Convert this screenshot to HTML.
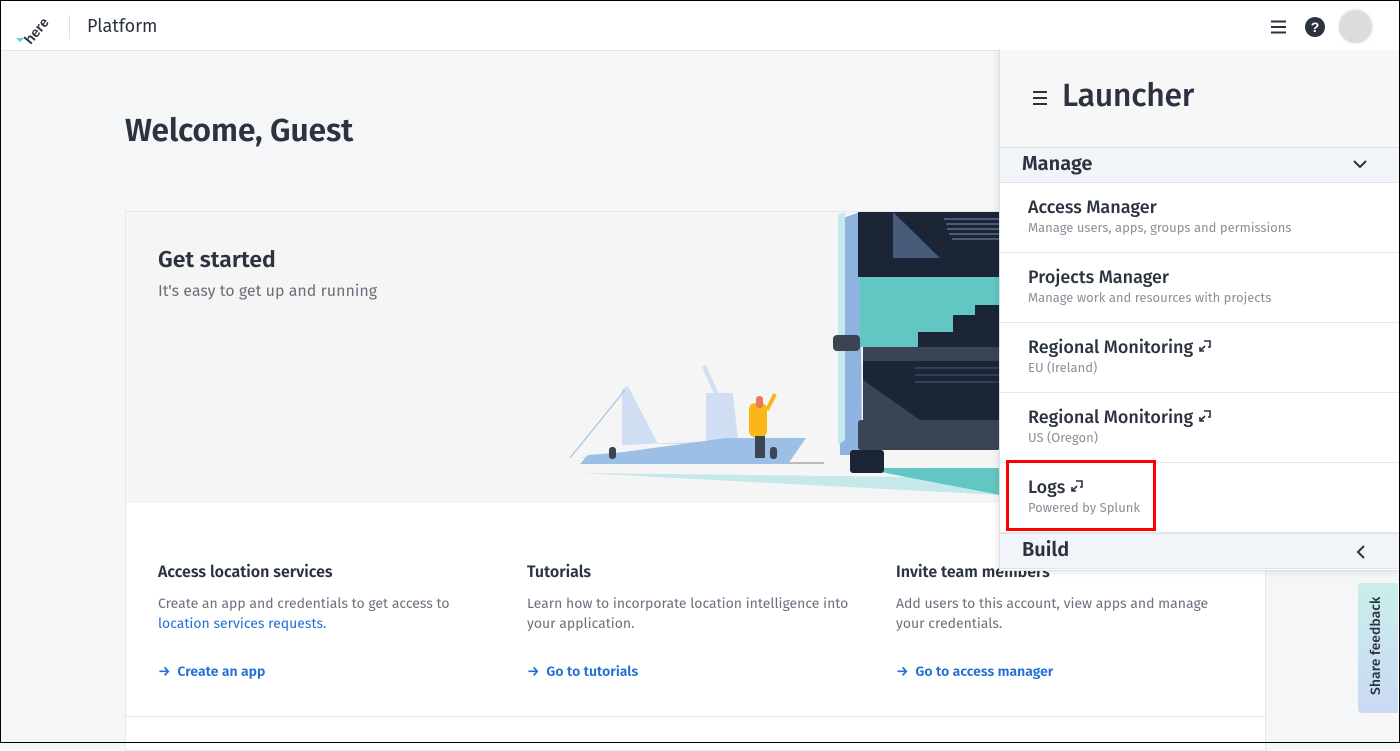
<!DOCTYPE html>
<html><head><meta charset="utf-8"><style>
*{box-sizing:border-box;margin:0;padding:0}
body{width:1400px;height:743px;overflow:hidden;font-family:"Fira Sans","Liberation Sans",sans-serif;background:#f5f6f7;position:relative;color:#2b3340}
.frame{position:absolute;inset:0;border:1px solid #000;pointer-events:none;z-index:50}
.hdr{position:absolute;left:0;top:0;width:1400px;height:51px;background:#fff;border-bottom:1px solid #e3e5e8}
.sep{position:absolute;left:69px;top:15px;width:1px;height:24px;background:#dde0e4}
.plat{position:absolute;left:87px;top:15px;font-size:18px;color:#2b3340}
h1{position:absolute;left:125px;top:112px;font-size:32px;font-weight:600;color:#2b3340;letter-spacing:-.2px}
.card{position:absolute;left:125px;top:211px;width:1141px;height:540px;background:#fff;border:1px solid #e6e8eb}
.hero{position:absolute;left:0;top:0;width:100%;height:291px;background:#f5f5f5;overflow:hidden}
.gs{position:absolute;left:32px;top:34px;font-size:23px;font-weight:600}
.gs2{position:absolute;left:32px;top:70px;font-size:16px;color:#6a717c}
.col{position:absolute;top:351px;width:330px}
.col h3{font-size:16px;font-weight:600;margin-bottom:12px}
.col p{font-size:14px;color:#6a717c;line-height:20px;height:69px}
.col a{color:#1f6fd6;text-decoration:none}
.col .l{font-size:14px;font-weight:600;color:#1f6fd6}
.line2{position:absolute;left:0;top:504px;width:100%;height:1px;background:#e3e5e8}
.panel{position:absolute;left:999px;top:50px;width:401px;height:521px;background:#fff;border-left:1px solid #dcdfe3;border-bottom:1px solid #dcdfe3;box-shadow:-2px 2px 6px rgba(0,0,0,.08)}
.ph{height:97px;background:#f7f7f7;position:relative}
.ph span{position:absolute;left:62px;top:27px;font-size:32px;font-weight:500;color:#2b3340;letter-spacing:-.3px}
.sec{height:36px;background:#f1f4f8;border-top:1px solid #dfe3e8;border-bottom:1px solid #dfe3e8;position:relative;font-size:20px;font-weight:600;padding:4px 0 0 22px}
.it{height:70px;border-bottom:1px solid #e6e8eb;padding:13px 0 0 28px}
.it b{display:block;font-size:18px;font-weight:500;color:#2b3340}
.it i{display:block;font-style:normal;font-size:13px;color:#8a9099;margin-top:3px}
.fb{position:absolute;left:1358px;top:583px;width:40px;height:130px;background:linear-gradient(#c9eeea,#cbd9f5);border-radius:4px 0 0 4px}
.fb span{position:absolute;left:9px;top:112px;transform:rotate(-90deg);transform-origin:0 0;font-size:14px;font-weight:500;white-space:nowrap;color:#2b3340}
</style></head><body>
<div class="hdr">
<svg style="position:absolute;left:12px;top:8px" width="40" height="38" viewBox="0 0 40 38"><text x="6" y="30" transform="rotate(-50 20 20)" font-family="Liberation Sans" font-weight="bold" font-size="14" fill="#2b3340">here</text><path d="M4 30 l8 0 l-4 4z" fill="#48dad0"/></svg>
<div class="sep"></div><div class="plat">Platform</div>
<svg style="position:absolute;left:1271px;top:20px" width="16" height="14"><path d="M0 1.5h15M0 7h15M0 12.5h15" stroke="#2b3340" stroke-width="2"/></svg>
<div style="position:absolute;left:1305px;top:17px;width:20px;height:20px;border-radius:50%;background:#2b3340;color:#fff;font-size:14px;font-weight:bold;text-align:center;line-height:20px;font-family:'Liberation Sans'">?</div>
<div style="position:absolute;left:1339px;top:10px;width:33px;height:33px;border-radius:50%;background:#dcdcdc;box-shadow:0 0 3px rgba(0,0,0,.15)"></div>
</div>
<h1>Welcome, Guest</h1>
<div class="card">
<div class="hero">
<div class="gs">Get started</div><div class="gs2">It's easy to get up and running</div>
<svg style="position:absolute;left:434px;top:-1px" width="707" height="292" viewBox="560 211 707 292">
<path d="M580 473 L1000 495 L1000 478 Z" fill="#c5e8ea"/><path d="M860 468 L1000 468 L1000 495 Z" fill="#62c6c2"/>
<path d="M611 463 L824 463" stroke="#bbb" stroke-width="2"/>
<path d="M622 389 L628 386 L658 444 L706 444 L706 393 L733 393 L738 440 L622 445 Z" fill="#cfdef2"/>
<path d="M704 366 L716 393" stroke="#cfdef2" stroke-width="4"/>
<path d="M580 464 L788 464 L806 438 L588 455 Z" fill="#9bbfe5"/>
<path d="M580 458 L726 438 L806 438 L788 458 Z" fill="#9bbfe5"/>
<path d="M570 458 L625 390" stroke="#9bbfe5" stroke-width="1"/>
<rect x="609" y="447" width="7" height="12" rx="3" fill="#3c4552"/><rect x="770" y="447" width="7" height="12" rx="3" fill="#3c4552"/>
<path d="M767 410 L775 394" stroke="#fbb718" stroke-width="4"/>
<rect x="749" y="403" width="18" height="34" rx="6" fill="#fbb718"/><rect x="756" y="396" width="7" height="12" rx="3" fill="#e57a5e"/><rect x="755" y="436" width="10" height="22" fill="#3c4552"/>
<path d="M843 218 L860 212 L862 455 L840 455 L840 430Z" fill="#8fb3e0"/><path d="M838 215 L845 212 L845 440 L838 445Z" fill="#c5e8ea"/>
<rect x="858" y="211" width="142" height="66" fill="#1b2535"/><path d="M893 212 L893 258 L940 258Z" fill="#465b78"/>
<g stroke="#5b6f8c" stroke-width="1.5"><path d="M944 219h56M946 224h54M947 229h53M949 234h51M952 239h48"/></g>
<rect x="860" y="277" width="140" height="70" fill="#62c6c2"/><path d="M918 347 L918 332 L953 332 L953 315 L975 315 L975 305 L1000 305 L1000 347Z" fill="#1b2535"/>
<rect x="863" y="347" width="137" height="14" fill="#3b4452"/><rect x="863" y="361" width="137" height="60" fill="#1b2535"/>
<path d="M863 380 L920 420 L1000 420 L1000 421 L863 421Z" fill="#3b4452"/>
<g stroke="#465b78"><path d="M915 368h85M915 375h85M915 382h85"/></g>
<rect x="858" y="420" width="142" height="30" rx="3" fill="#3b4452"/><rect x="850" y="450" width="34" height="23" rx="3" fill="#1b2535"/>
<rect x="833" y="335" width="27" height="16" rx="4" fill="#3b4452"/>
</svg>
</div>
<div class="col" style="left:32px"><h3>Access location services</h3><p>Create an app and credentials to get access to <a>location services requests.</a></p><div class="l">→&nbsp; Create an app</div></div>
<div class="col" style="left:401px"><h3>Tutorials</h3><p>Learn how to incorporate location intelligence into your application.</p><div class="l">→&nbsp; Go to tutorials</div></div>
<div class="col" style="left:770px"><h3>Invite team members</h3><p>Add users to this account, view apps and manage your credentials.</p><div class="l">→&nbsp; Go to access manager</div></div>
<div class="line2"></div>
</div>
<div class="panel">
<div class="ph"><svg style="position:absolute;left:33px;top:41px" width="15" height="14"><path d="M0 1h14M0 7h14M0 13h14" stroke="#2b3340" stroke-width="2"/></svg><span>Launcher</span></div>
<div class="sec">Manage<svg style="position:absolute;right:33px;top:12px" width="14" height="9"><path d="M1 1l6 6 6-6" stroke="#2b3340" stroke-width="2" fill="none"/></svg></div>
<div class="it"><b>Access Manager</b><i>Manage users, apps, groups and permissions</i></div>
<div class="it"><b>Projects Manager</b><i>Manage work and resources with projects</i></div>
<div class="it"><b>Regional Monitoring <svg width="14" height="14"><path d="M6 2h6v6h-2M2 12l5-5M2 8v4h4" stroke="#2b3340" stroke-width="1.6" fill="none"/></svg></b><i>EU (Ireland)</i></div>
<div class="it"><b>Regional Monitoring <svg width="14" height="14"><path d="M6 2h6v6h-2M2 12l5-5M2 8v4h4" stroke="#2b3340" stroke-width="1.6" fill="none"/></svg></b><i>US (Oregon)</i></div>
<div class="it"><b>Logs <svg width="14" height="14"><path d="M6 2h6v6h-2M2 12l5-5M2 8v4h4" stroke="#2b3340" stroke-width="1.6" fill="none"/></svg></b><i>Powered by Splunk</i></div>
<div class="sec">Build<svg style="position:absolute;right:35px;top:11px" width="9" height="14"><path d="M8 1l-6 6 6 6" stroke="#2b3340" stroke-width="2" fill="none"/></svg></div>
</div>
<div style="position:absolute;left:1006px;top:460px;width:150px;height:71px;border:3px solid #f00;z-index:20"></div>
<div class="fb"><span>Share feedback</span></div>
<div class="frame"></div>
</body></html>
